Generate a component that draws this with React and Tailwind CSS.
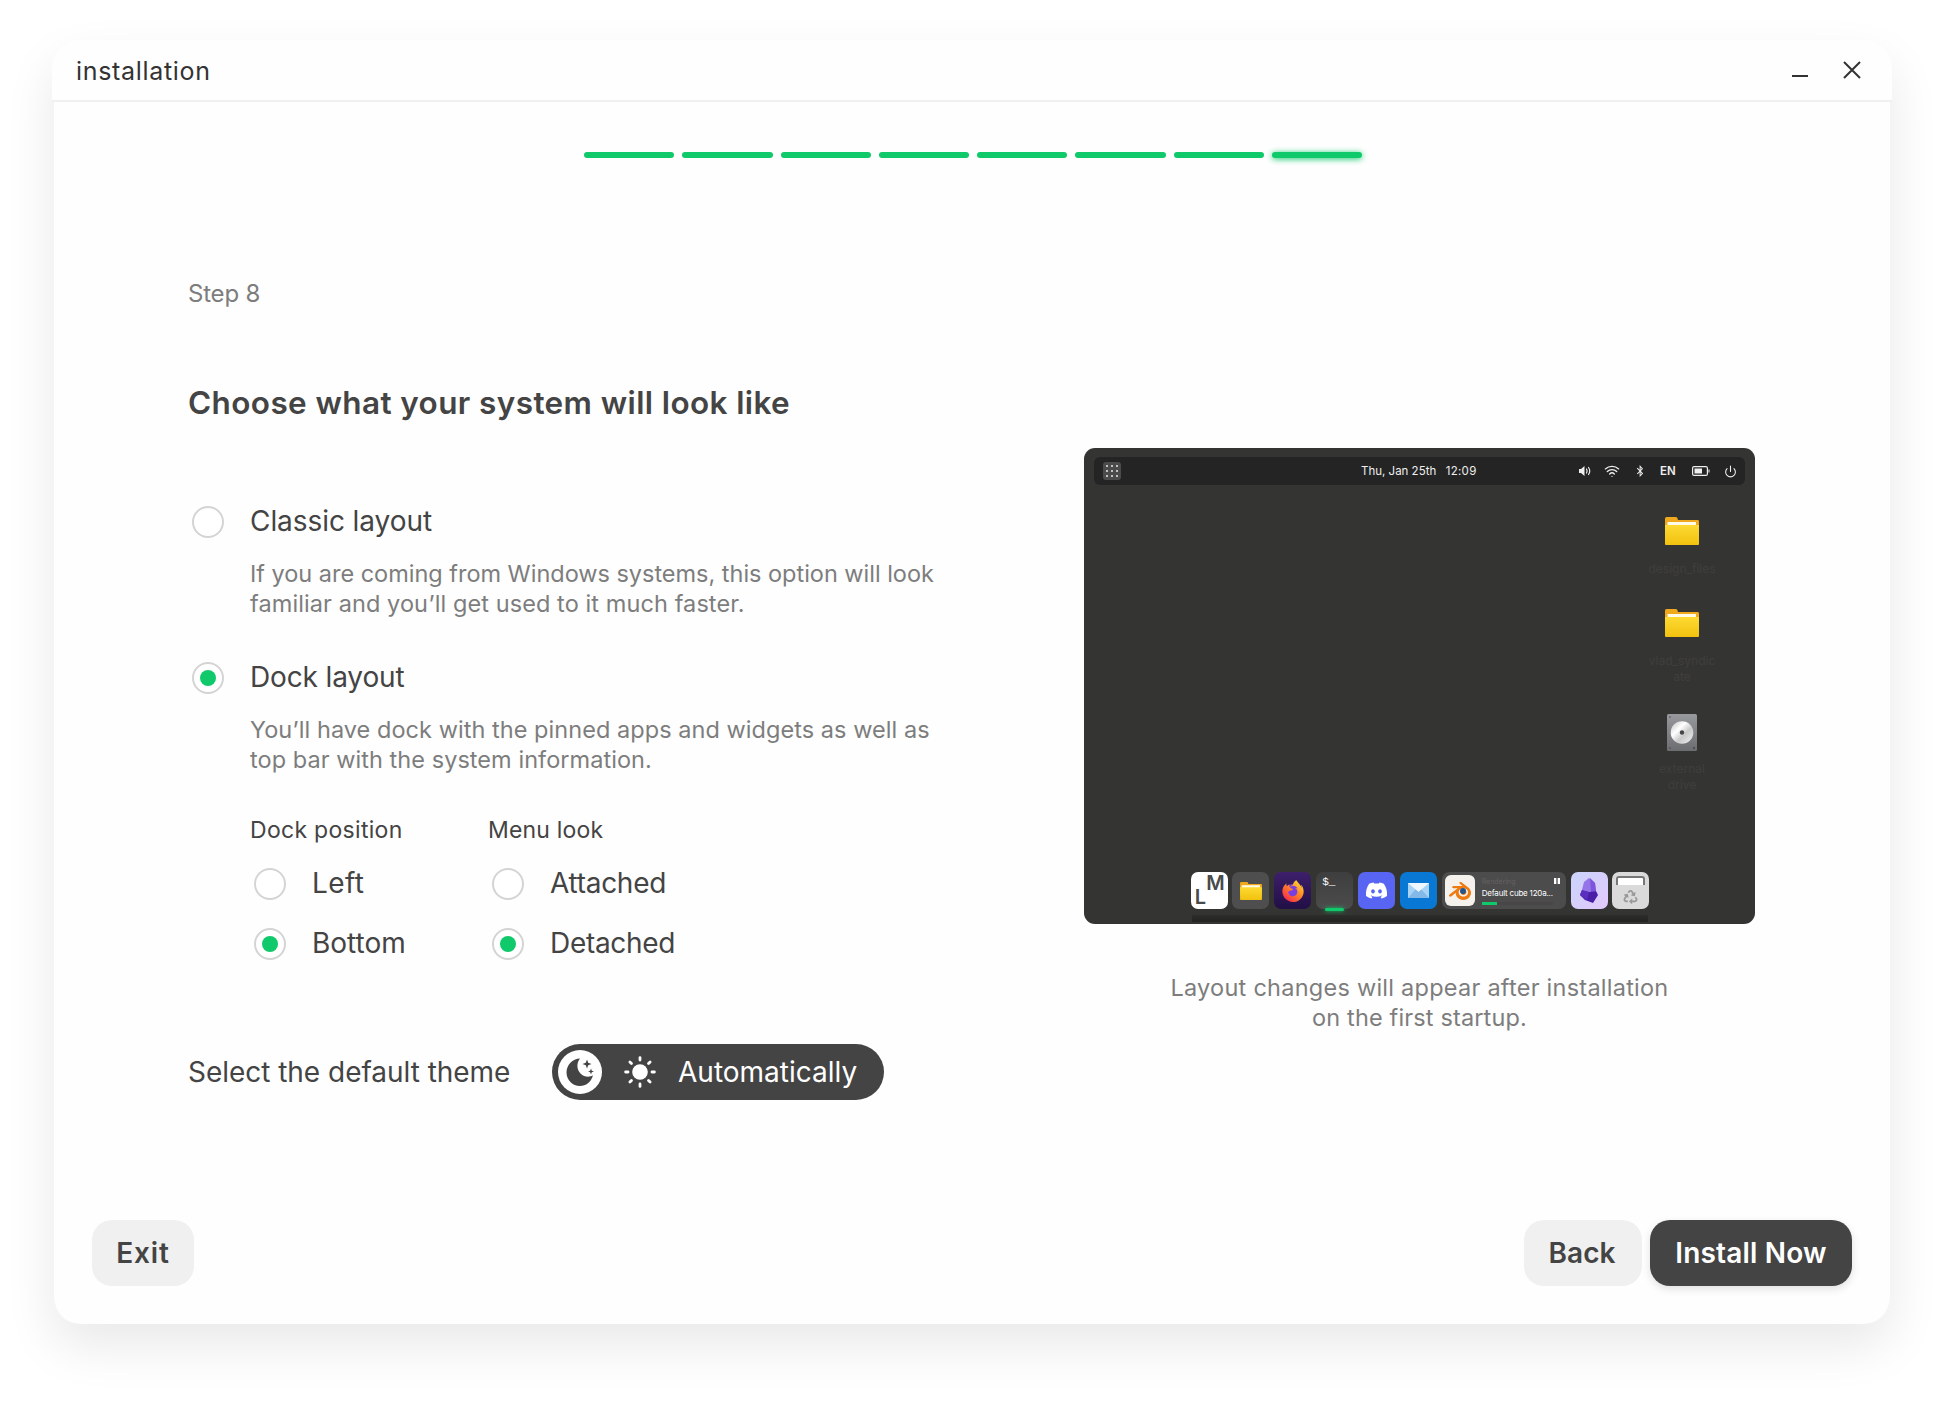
import React from "react";
import { FaDiscord, FaRecycle, FaBluetoothB } from "react-icons/fa";
import { SiBlender, SiFirefoxbrowser } from "react-icons/si";
import { Wifi, Power } from "lucide-react";

function Radio({ on }) {
  return (
    <span className="flex h-8 w-8 shrink-0 items-center justify-center rounded-full border-2 border-[#d4d4d4] bg-white">
      {on && <span className="h-4 w-4 rounded-full bg-[#0fc96b]" />}
    </span>
  );
}

function Option({ on, label, tracking = "" }) {
  return (
    <div className="flex items-start gap-[26px] pl-1">
      <Radio on={on} />
      <span className={"text-[28px] leading-[30px] text-[#444] " + tracking}>{label}</span>
    </div>
  );
}

function Folder({ className }) {
  return (
    <svg viewBox="0 0 34 28" className={className}>
      <defs>
        <linearGradient id="fold" x1="0" y1="0" x2="0" y2="1">
          <stop offset="0" stopColor="#fdda33" />
          <stop offset="1" stopColor="#f2c10f" />
        </linearGradient>
      </defs>
      <path d="M0 1.500Q0 0 1.500 0H11Q12.500 0 13 3H33Q34 3 34 4.500V20H0Z" fill="#f0a81c" />
      <rect x="2.500" y="5" width="28.500" height="6" fill="#fffbe6" />
      <path d="M0 8H34V27Q34 28 33 28H1Q0 28 0 27Z" fill="url(#fold)" />
    </svg>
  );
}

function Drive() {
  return (
    <svg viewBox="0 0 30 37" className="h-[37px] w-[30px]">
      <defs>
        <linearGradient id="drv" x1="0" y1="0" x2="0" y2="1">
          <stop offset="0" stopColor="#98999c" />
          <stop offset="1" stopColor="#6c6d71" />
        </linearGradient>
        <linearGradient id="disc" x1="0" y1="0" x2="1" y2="1">
          <stop offset="0" stopColor="#bdbdbd" />
          <stop offset=".35" stopColor="#fff" />
          <stop offset=".6" stopColor="#c9c9c9" />
          <stop offset="1" stopColor="#f4f4f4" />
        </linearGradient>
      </defs>
      <rect width="30" height="37" rx="1.500" fill="url(#drv)" />
      <circle cx="15" cy="18.500" r="11.300" fill="url(#disc)" />
      <circle cx="15" cy="18.500" r="2.200" fill="#444" />
      <circle cx="3" cy="3" r="1" fill="#66676a" />
      <circle cx="27" cy="34" r="1.200" fill="#505154" />
      <circle cx="3" cy="34" r="1" fill="#56575a" />
    </svg>
  );
}

const tile = "relative flex h-[37px] w-[37px] shrink-0 items-center justify-center rounded-[7px]";

function Dock() {
  return (
    <div className="flex justify-center gap-[4.850px] pl-px">
      <div className={tile + " bg-white font-semibold text-[#4a4a4a]"}>
        <span className="absolute left-[4px] top-[16px] text-[20px] leading-[19px]">L</span>
        <span className="absolute right-[3px] top-[2px] text-[20px] leading-[19px]">M</span>
      </div>
      <div className={tile + " bg-[#4e4e4e]"}><Folder className="h-[18px] w-[22px]" /></div>
      <div className={tile + " bg-linear-to-b from-[#3d1f6b] to-[#220f46]"}>
        <svg width="0" height="0" className="absolute">
          <linearGradient id="fire" x1="1" y1="0" x2="0.200" y2="1">
            <stop offset="0" stopColor="#fff04a" />
            <stop offset=".45" stopColor="#ff9023" />
            <stop offset="1" stopColor="#f5254f" />
          </linearGradient>
        </svg>
        <span className="absolute h-[13px] w-[13px] rounded-full bg-[#7a3de0]" />
        <SiFirefoxbrowser className="relative h-[22px] w-[22px] fill-[url(#fire)]" />
      </div>
      <div className={tile + " bg-linear-to-b from-[#3e3e3e] to-[#4c4c4c]"}>
        <span className="absolute left-[6px] top-[3px] font-['Liberation_Mono',monospace] text-[11px] leading-[14px] text-white">$_</span>
        <span className="absolute bottom-[-2px] left-[9px] h-[3px] w-[19px] rounded-full bg-[#0fc96b] shadow-[0_0_4px_#0fc96b]" />
      </div>
      <div className={tile + " bg-[#5865f2] text-white"}><FaDiscord className="h-[23px] w-[23px]" /></div>
      <div className={tile + " bg-[#0878d4]"}>
        <svg viewBox="0 0 21 15" className="h-[15px] w-[21px]">
          <rect width="21" height="15" fill="#a9d3f5" />
          <path d="M0 0H21L10.500 9Z" fill="#eef7ff" />
          <path d="M0 15L7.500 6.500L10.500 9L13.500 6.500L21 15Z" fill="#82b9e8" />
        </svg>
      </div>
      <div className="flex h-[37px] w-[124px] shrink-0 items-center rounded-[7px] bg-[#4c4c4c] pl-[3px]">
        <div className="relative flex h-[31px] w-[30px] items-center justify-center rounded-[6px] bg-[#f5f2ee]">
          <SiBlender className="h-[22px] w-[22px] text-[#ee7a12]" />
          <span className="absolute left-[15px] top-[13px] h-[6px] w-[6px] rounded-full bg-[#22558f]" />
        </div>
        <div className="ml-[7px] flex w-[78px] flex-col">
          <div className="flex items-center justify-between">
            <span className="text-[7px] leading-[9px] text-[#656262]">Rendering</span>
            <span className="h-[6px] w-[6px] border-x-[2.500px] border-white bg-[#888]" />
          </div>
          <span className="mt-[2px] whitespace-nowrap text-[8px] leading-[10px] tracking-[-0.200px] text-white">Default cube 120a...</span>
          <div className="mt-[4px] h-[3px] w-[71px] rounded-full bg-[#484646]"><div className="h-[3px] w-[15px] bg-[#0fc96b]" /></div>
        </div>
      </div>
      <div className={tile + " bg-linear-to-br from-[#c9d4fc] to-[#e2c8fb]"}>
        <svg viewBox="0 0 18 25" className="h-[25px] w-[18px]">
          <path d="M9 0L15 5L16 13L9 14L2 12L4 4Z" fill="#9474e8" />
          <path d="M10 0L15 5L16 13L11 14Z" fill="#7d55dd" />
          <path d="M2 12L9 14L16 13L18 17L13 25L5 22L0 17Z" fill="#4a1fa8" />
          <path d="M2 12L9 14L7 22L0 17Z" fill="#5b2ec0" />
        </svg>
      </div>
      <div className={tile + " items-end bg-[#dadada]"}>
        <span className="absolute left-[4px] top-[4px] h-[9px] w-[29px] rounded-t-[3px] border-2 border-b-0 border-[#777] bg-white" />
        <FaRecycle className="mb-[5px] h-[14px] w-[15px] text-[#999]" />
      </div>
    </div>
  );
}

function Preview() {
  return (
    <div className="relative flex h-[476px] w-[671px] flex-col overflow-hidden rounded-[11px] bg-[#343532]">
      <div className="mx-[10px] mt-[9px] flex h-[28px] shrink-0 items-center rounded-[6px] bg-[#242424] text-[11.500px] text-[#eee]">
        <div className="ml-[9px] grid h-[18px] w-[18px] grid-cols-3 place-items-center rounded-[3px] bg-[#4b4b4b] p-[2px]">
          {Array.from({ length: 9 }, (_, i) => <i key={i} className="h-[2px] w-[2px] rounded-full bg-[#e8e8e8]" />)}
        </div>
        <span className="ml-[240px] mt-[2px] whitespace-nowrap">Thu, Jan 25th</span>
        <span className="ml-[9.500px] mt-[2px] tracking-[0.300px]">12:09</span>
        <div className="ml-auto mr-[8px] flex items-center">
          <svg viewBox="0 0 14 12" className="h-[12px] w-[14px]" fill="none" stroke="#eee" strokeWidth="1.200" strokeLinecap="round">
            <path d="M1 4H3L6.500 1V11L3 8H1Z" fill="#eee" stroke="none" />
            <path d="M8.500 4Q9.800 6 8.500 8M10.500 2.500Q13 6 10.500 9.500" />
          </svg>
          <Wifi className="ml-[12px] h-[16px] w-[16px]" strokeWidth={2} />
          <FaBluetoothB className="ml-[14px] h-[12px] w-[12px]" />
          <span className="ml-[14px] mt-[2px] text-[11.500px] font-semibold tracking-[0.200px]">EN</span>
          <svg viewBox="0 0 18 10" className="ml-[15.500px] h-[10px] w-[18px]">
            <rect x=".6" y=".6" width="14.800" height="8.800" rx="1.500" fill="none" stroke="#eee" strokeWidth="1.200" />
            <rect x="2.500" y="2.500" width="7.500" height="5" fill="#eee" />
            <rect x="16.500" y="3.500" width="1" height="3" fill="#eee" />
          </svg>
          <Power className="ml-[14.500px] h-[13px] w-[13px]" strokeWidth={2} />
        </div>
      </div>
      <div className="mr-[26px] mt-[32px] flex w-[94px] flex-col items-center self-end text-center text-[12px] leading-[16px] text-[#403e3c]">
        <Folder className="h-[28px] w-[34px]" />
        <span className="mt-[16px]">design_files</span>
        <Folder className="mt-[32px] h-[28px] w-[34px]" />
        <span className="mt-[16px]">vlad_syndic<br />ate</span>
        <div className="mt-[29px]"><Drive /></div>
        <span className="mt-[10px]">external<br />drive</span>
      </div>
      <div className="mb-[15px] mt-auto"><Dock /></div>
      <div className="absolute bottom-[2px] left-[108px] h-[7px] w-[456px] bg-linear-to-b from-[#2d2d2b] to-[#222220]" />
    </div>
  );
}

function ThemeSwitch() {
  return (
    <div className="flex h-14 w-[332px] items-center rounded-full bg-[#444] pl-[6px] text-white">
      <span className="flex h-11 w-11 items-center justify-center rounded-full bg-white">
        <svg viewBox="0 0 30 30" className="h-[30px] w-[30px]" fill="#444">
          <path d="M15 1.500C11.500 5.500 11.500 12.500 15.500 16.500C19 20 24 20.500 28 18.500C26 25 21 29 15 29C7.500 29 1.500 23 1.500 15.500C1.500 8 7.500 1.500 15 1.500Z" />
          <path d="M22 2.500L23.200 5.800L26.500 7L23.200 8.200L22 11.500L20.800 8.200L17.500 7L20.800 5.800Z" />
          <path d="M26 11.500L26.800 13.700L29 14.500L26.800 15.300L26 17.500L25.200 15.300L23 14.500L25.200 13.700Z" />
        </svg>
      </span>
      <svg viewBox="0 0 32 32" className="ml-[22px] h-8 w-8" stroke="#fff" strokeWidth="2.800" strokeLinecap="round">
        <circle cx="16" cy="16" r="7.800" fill="#fff" stroke="none" />
        <path d="M16 1.600V4M16 28V30.400M1.600 16H4M28 16H30.400M5.900 5.900L7.500 7.500M24.500 24.500L26.100 26.100M26.100 5.900L24.500 7.500M7.500 24.500L5.900 26.100" />
      </svg>
      <span className="ml-[22px]">Automatically</span>
    </div>
  );
}

export default function App() {
  return (
    <div className="flex h-[1408px] w-[1960px] justify-center bg-white pt-10 font-['Inter',sans-serif]">
      <div className="ml-[-16px] flex h-[1284px] w-[1840px] flex-col rounded-[28px] bg-[#fefefe] shadow-[0_22px_50px_rgba(0,0,0,0.09)]">
        <header className="flex h-[62px] shrink-0 items-center border-b-2 border-[#f0f0f0] pl-6 pr-[31px] text-[#333]">
          <span className="mt-[4px] text-[25px] tracking-[0.680px]">installation</span>
          <span className="ml-auto mt-3 h-[2px] w-4 bg-[#333]" />
          <svg viewBox="0 0 18 18" className="ml-[35px] h-[18px] w-[18px]" stroke="#333" strokeWidth="2"><path d="M1 1L17 17M17 1L1 17" /></svg>
        </header>
        <div className="flex grow flex-col rounded-b-[28px] border-x-2 border-[#f4f4f4]">
          <div className="ml-[2px] mt-[50px] flex gap-2 self-center">
            {Array.from({ length: 8 }, (_, i) => (
              <span key={i} className={"h-[6px] w-[90.250px] rounded-full bg-[#0fc96b]" + (i === 7 ? " shadow-[0_1px_6px_#0fc96b]" : "")} />
            ))}
          </div>
          <main className="flex pl-[134px] pt-[120px] text-[#444]">
            <section className="w-[896px]">
              <p className="pt-px text-[24px] leading-[30px] tracking-[-0.200px] text-[#7d7d7d]">Step 8</p>
              <h1 className="mt-[74px] text-[31.500px] font-semibold leading-[40px] tracking-[0.390px]">Choose what your system will look like</h1>
              <div className="mt-[83px]"><Option label="Classic layout" tracking="tracking-[-0.070px]" /></div>
              <p className="ml-[62px] mt-[21px] text-[23.500px] leading-[30px] text-[#7d7d7d]"><span className="tracking-[-0.020px]">If you are coming from Windows systems, this option will look</span><br /><span className="tracking-[0.090px]">familiar and you’ll get used to it much faster.</span></p>
              <div className="mt-[43px]"><Option on label="Dock layout" tracking="tracking-[-0.140px]" /></div>
              <p className="ml-[62px] mt-[21px] text-[23.500px] leading-[30px] tracking-[0.050px] text-[#7d7d7d]">You’ll have dock with the pinned apps and widgets as well as<br />top bar with the system information.</p>
              <div className="ml-[62px] mt-[40px] flex text-[23px] leading-[30px]">
                <div className="w-[238px]">
                  <span className="tracking-[0.300px]">Dock position</span>
                  <div className="mt-[23px] flex flex-col gap-7"><Option label="Left" tracking="tracking-[0.400px]" /><Option on label="Bottom" /></div>
                </div>
                <div>
                  <span className="tracking-[0.180px]">Menu look</span>
                  <div className="mt-[23px] flex flex-col gap-7"><Option label="Attached" tracking="tracking-[-0.280px]" /><Option on label="Detached" tracking="tracking-[-0.300px]" /></div>
                </div>
              </div>
            </section>
            <section className="mt-[170px] flex w-[671px] flex-col items-center">
              <Preview />
              <p className="mt-[49px] text-center text-[23.500px] leading-[30px] tracking-[0.250px] text-[#7d7d7d]">Layout changes will appear after installation<br /><span className="tracking-[0.150px]">on the first startup.</span></p>
            </section>
          </main>
          <div className="mt-[11px] flex items-center pl-[134px] text-[28px] text-[#444]">
            <span className="w-[364px] whitespace-nowrap tracking-[-0.030px]">Select the default theme</span>
            <ThemeSwitch />
          </div>
          <footer className="mb-[38px] mt-auto flex gap-2 px-[38px] text-[28px] font-semibold text-[#444]">
            <button className="h-[66px] w-[102px] rounded-[20px] bg-[#f0f0f0] tracking-[0.800px]">Exit</button>
            <button className="ml-auto h-[66px] w-[118px] rounded-[20px] bg-[#f0f0f0] pr-[2px]">Back</button>
            <button className="h-[66px] w-[202px] rounded-[20px] bg-[#444] tracking-[0.180px] text-white shadow-[0_3px_8px_rgba(0,0,0,0.12)]">Install Now</button>
          </footer>
        </div>
      </div>
    </div>
  );
}
